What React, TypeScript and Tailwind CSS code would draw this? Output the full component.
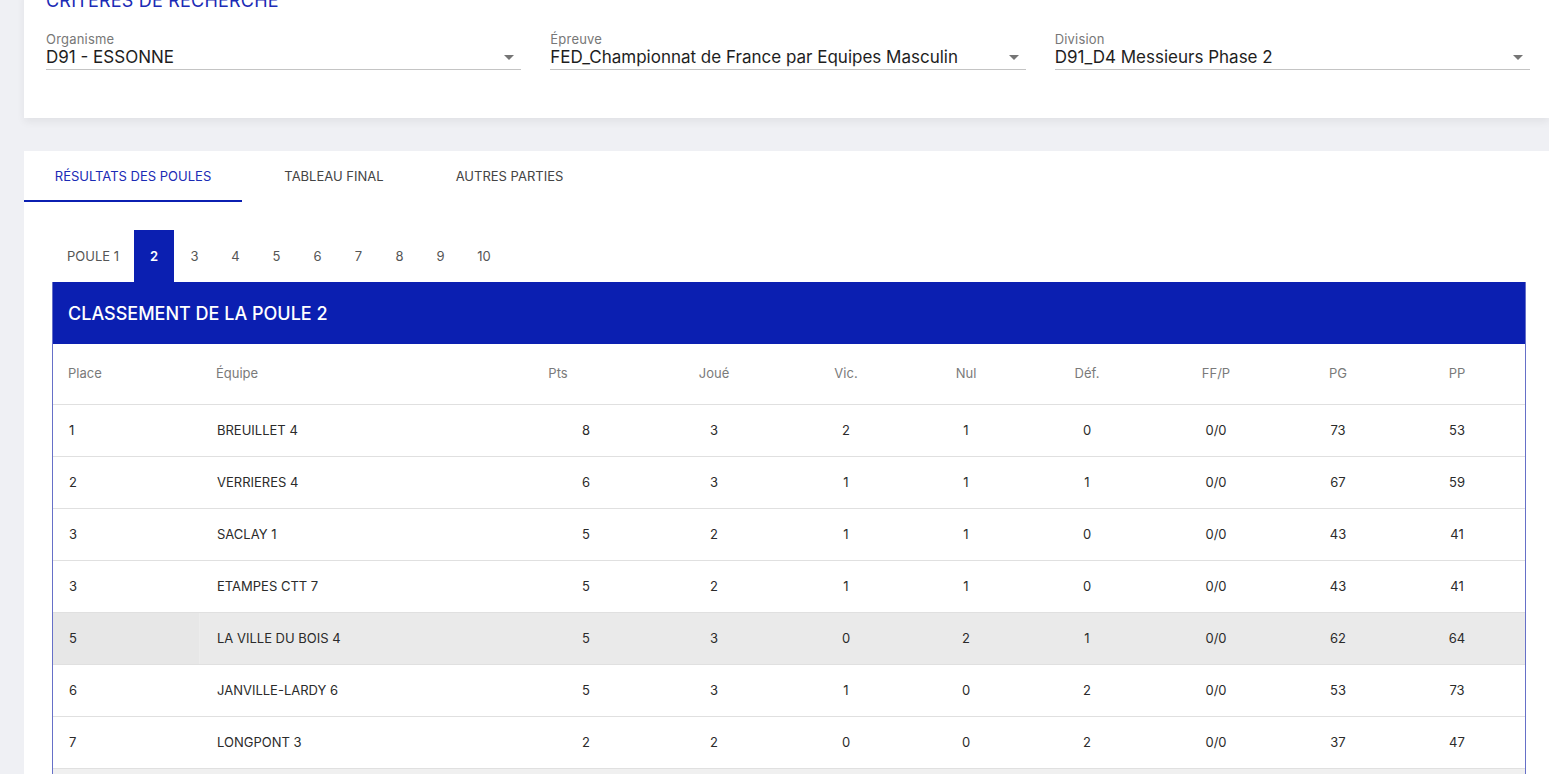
import React from "react";

const rows = [
  ["1", "BREUILLET 4", "8", "3", "2", "1", "0", "0/0", "73", "53"],
  ["2", "VERRIERES 4", "6", "3", "1", "1", "1", "0/0", "67", "59"],
  ["3", "SACLAY 1", "5", "2", "1", "1", "0", "0/0", "43", "41"],
  ["3", "ETAMPES CTT 7", "5", "2", "1", "1", "0", "0/0", "43", "41"],
  ["5", "LA VILLE DU BOIS 4", "5", "3", "0", "2", "1", "0/0", "62", "64"],
  ["6", "JANVILLE-LARDY 6", "5", "3", "1", "0", "2", "0/0", "53", "73"],
  ["7", "LONGPONT 3", "2", "2", "0", "0", "2", "0/0", "37", "47"],
  ["8", "", "", "", "", "", "", "", "", ""],
];

const headers = ["Place", "Équipe", "Pts", "Joué", "Vic.", "Nul", "Déf.", "FF/P", "PG", "PP"];

const grid = "grid grid-cols-[147px_277px_162px_150px_114px_126px_116px_142px_102px_136px]";

function Select({ label, value }: { label: string; value: string }) {
  return (
    <div className="flex-1 min-w-0">
      <div className="text-[13px] leading-[16px] text-[#777777] tracking-[0.2px]">{label}</div>
      <div className="flex items-center border-b border-[#c4c4c4] pb-[2px]">
        <div className="flex-1 text-[17px] leading-[20px] text-[#1e1e1e] whitespace-nowrap overflow-hidden">{value}</div>
        <svg width="10" height="5" viewBox="0 0 10 5" className="mr-[7px] ml-2 shrink-0">
          <path d="M0 0 L10 0 L5 5 Z" fill="#757575" />
        </svg>
      </div>
    </div>
  );
}

export default function App() {
  return (
    <div
      className="w-[1549px] h-[774px] overflow-hidden bg-[#eff0f4]"
      style={{ fontFamily: "Inter, 'Liberation Sans', sans-serif" }}
    >
      {/* Search card */}
      <div className="ml-[24px] -mt-[10px] bg-white pl-[22px] pr-[19px] pb-[48px] shadow-[0_4px_8px_rgba(0,0,0,0.06)]">
        <div className="text-[18px] leading-[22px] text-[#1b2bb5] uppercase tracking-[0.2px]">Critères de recherche</div>
        <div className="mt-[19px] flex gap-[29px]">
          <Select label="Organisme" value="D91 - ESSONNE" />
          <Select label="Épreuve" value="FED_Championnat de France par Equipes Masculin" />
          <Select label="Division" value="D91_D4 Messieurs Phase 2" />
        </div>
      </div>

      {/* Results card */}
      <div className="ml-[24px] mt-[33px] bg-white h-[700px]">
        <div className="flex h-[51px]">
          <div className="w-[218px] flex items-center justify-center border-b-2 border-[#0b1fb1] text-[13px] text-[#1b2bb5] uppercase pt-[3px]">
            Résultats des poules
          </div>
          <div className="w-[184px] flex items-center justify-center text-[13px] text-[#444444] uppercase pt-[1px]">
            Tableau final
          </div>
          <div className="w-[167px] flex items-center justify-center text-[13px] text-[#444444] uppercase pt-[1px]">
            Autres parties
          </div>
        </div>

        <div className="ml-[28px] mr-[23px] mt-[28px]">
          <div className="flex h-[52px]">
            <div className="w-[82px] flex items-center justify-center text-[13px] text-[#555555] pt-[1px]">POULE 1</div>
            <div className="w-[40px] flex items-center justify-center text-[13px] font-semibold text-white bg-[#0b1fb1] pt-[1px]">2</div>
            {["3", "4", "5", "6", "7", "8", "9"].map((n) => (
              <div key={n} className="w-[41px] flex items-center justify-center text-[13px] text-[#555555] pt-[1px]">
                {n}
              </div>
            ))}
            <div className="w-[46px] flex items-center justify-center text-[13px] text-[#555555] pt-[1px]">10</div>
          </div>

          <div className="border-x border-[#6670c8]">
            <div className="h-[62px] bg-[#0b1fb1] flex items-center pl-[15px] text-[18px] font-medium text-white uppercase">
              Classement de la poule 2
            </div>
            <div className={`${grid} h-[61px] border-b border-[#e0e0e0] items-center text-[13px] text-[#7a7a7a]`}>
              {headers.map((h, i) => (
                <div
                  key={h}
                  className={
                    i === 0 ? "pl-[15px]" : i === 1 ? "pl-[16px]" : "text-center"
                  }
                >
                  {h}
                </div>
              ))}
            </div>
            {rows.map((r, ri) => (
              <div
                key={ri}
                className={`${grid} h-[52px] border-b border-[#e0e0e0] items-stretch text-[13px] text-[#2b2b2b] ${
                  ri === 4 ? "bg-[#eaeaea]" : ri === 7 ? "bg-[#f0f0f0]" : "bg-white"
                }`}
              >
                {r.map((c, ci) => (
                  <div
                    key={ci}
                    className={`flex items-center ${
                      ci === 0
                        ? `pl-[16px] ${ri === 4 ? "bg-[#e7e7e7] border-r border-[#ececec]" : ""}`
                        : ci === 1
                        ? "pl-[17px]"
                        : ci === 2
                        ? "justify-center pl-[56px]"
                        : "justify-center"
                    }`}
                  >
                    {c}
                  </div>
                ))}
              </div>
            ))}
          </div>
        </div>
      </div>
    </div>
  );
}
